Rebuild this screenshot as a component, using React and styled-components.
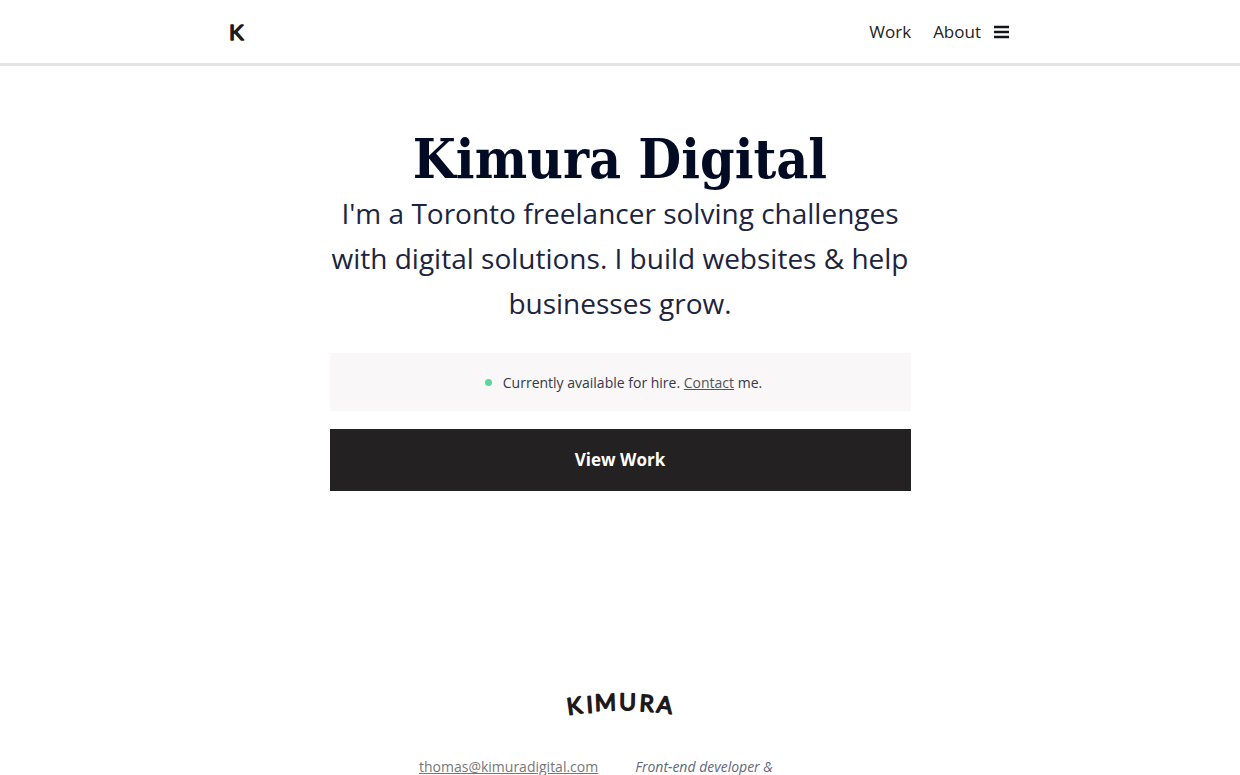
import React from "react";
import styled, { createGlobalStyle } from "styled-components";

const GlobalStyle = createGlobalStyle`
  * { box-sizing: border-box; }
  body {
    margin: 0;
    background: #fff;
    color: #1d2440;
    font-family: "Open Sans", "Noto Sans", sans-serif;
    font-size: 14px;
    line-height: 24px;
  }
  a { color: inherit; }
  ::-webkit-scrollbar { display: none; }
`;

const Header = styled.header`
  border-bottom: 3px solid #e3e3e3;
`;

const HeaderInner = styled.div`
  display: flex;
  align-items: center;
  justify-content: space-between;
  max-width: 780px;
  height: 63px;
  margin: 0 auto;
`;

const HomeLink = styled.a`
  display: flex;
`;

const Nav = styled.nav`
  display: flex;
  align-items: center;
`;

const NavLink = styled.a`
  margin-right: ${(p) => (p.$last ? "13px" : "22px")};
  color: #222;
  font-size: 17px;
  text-decoration: none;
`;

const MenuButton = styled.button`
  display: flex;
  padding: 0;
  border: 0;
  background: none;
  color: #10151c;
`;

const Hero = styled.main`
  display: flex;
  flex-direction: column;
  max-width: 581px;
  margin: 0 auto;
  padding-top: 61px;
  text-align: center;
`;

const Title = styled.h1`
  margin: 0;
  color: #020b24;
  font-family: "DejaVu Serif Condensed", "DejaVu Serif", serif;
  font-size: 55px;
  font-weight: 700;
  line-height: 64px;
`;

const Lead = styled.p`
  margin: 0;
  font-size: 28px;
  line-height: 45px;
`;

const Notice = styled.p`
  display: flex;
  align-items: center;
  justify-content: center;
  gap: 11px;
  min-height: 58px;
  margin: 27px 0 18px;
  padding: 1px 0 0 7px;
  background: #f9f7f8;
  color: #35384a;
`;

const StatusDot = styled.span`
  width: 7px;
  height: 7px;
  border-radius: 50%;
  background: #5bd79b;
`;

const TextLink = styled.a`
  color: #555;
`;

const WorkButton = styled.button`
  padding: 19px;
  border: 0;
  background: #232122;
  color: #fff;
  font: 700 17px/24px "Open Sans", "Noto Sans", sans-serif;
`;

const Footer = styled.footer`
  display: flex;
  flex-direction: column;
  align-items: center;
  gap: 30px;
  margin-top: 192px;
`;

const FooterColumns = styled.div`
  display: flex;
  gap: 37px;
  width: 100%;
  max-width: 402px;
  color: #62677a;
`;

const Email = styled.a`
  color: #777;
`;

const Role = styled.em`
  height: 19px;
`;

const Mark = styled.svg`
  display: block;
  overflow: visible;
  fill: #1d191a;
  stroke: #1d191a;
  stroke-linejoin: round;
  stroke-linecap: round;
  font-family: Lato, sans-serif;
  font-weight: 400;
`;

export default function App() {
  return (
    <>
      <GlobalStyle />
      <Header>
        <HeaderInner>
          <HomeLink href="#" aria-label="Kimura home">
            <Mark width="20" height="30" viewBox="0 0 20 30" fontSize="22" strokeWidth="1.4">
              <text x="-1" y="23">K</text>
            </Mark>
          </HomeLink>
          <Nav>
            <NavLink href="#work">Work</NavLink>
            <NavLink href="#about" $last>About</NavLink>
            <MenuButton type="button" aria-label="Menu">
              <svg width="16" height="14" viewBox="0 0 16 14" stroke="currentColor" strokeWidth="2.4">
                <path d="M0 2H15M0 7H15M0 12H15" />
              </svg>
            </MenuButton>
          </Nav>
        </HeaderInner>
      </Header>
      <Hero>
        <Title>Kimura Digital</Title>
        <Lead>I'm a Toronto freelancer solving challenges with digital solutions. I build websites &amp; help businesses grow.</Lead>
        <Notice>
          <StatusDot />
          <span>Currently available for hire. <TextLink href="#contact">Contact</TextLink> me.</span>
        </Notice>
        <WorkButton type="button">View Work</WorkButton>
      </Hero>
      <Footer>
        <Mark width="116" height="42" viewBox="0 0 116 42" fontSize="23" strokeWidth="1.5">
          <text
            x="6 25 33 57 77 94"
            y="32 30 28 27 28 29"
            rotate="-8 -4 -2 1 4 7"
          >KIMURA</text>
        </Mark>
        <FooterColumns>
          <Email href="mailto:thomas@kimuradigital.com">thomas@kimuradigital.com</Email>
          <Role>Front-end developer &amp;</Role>
        </FooterColumns>
      </Footer>
    </>
  );
}
